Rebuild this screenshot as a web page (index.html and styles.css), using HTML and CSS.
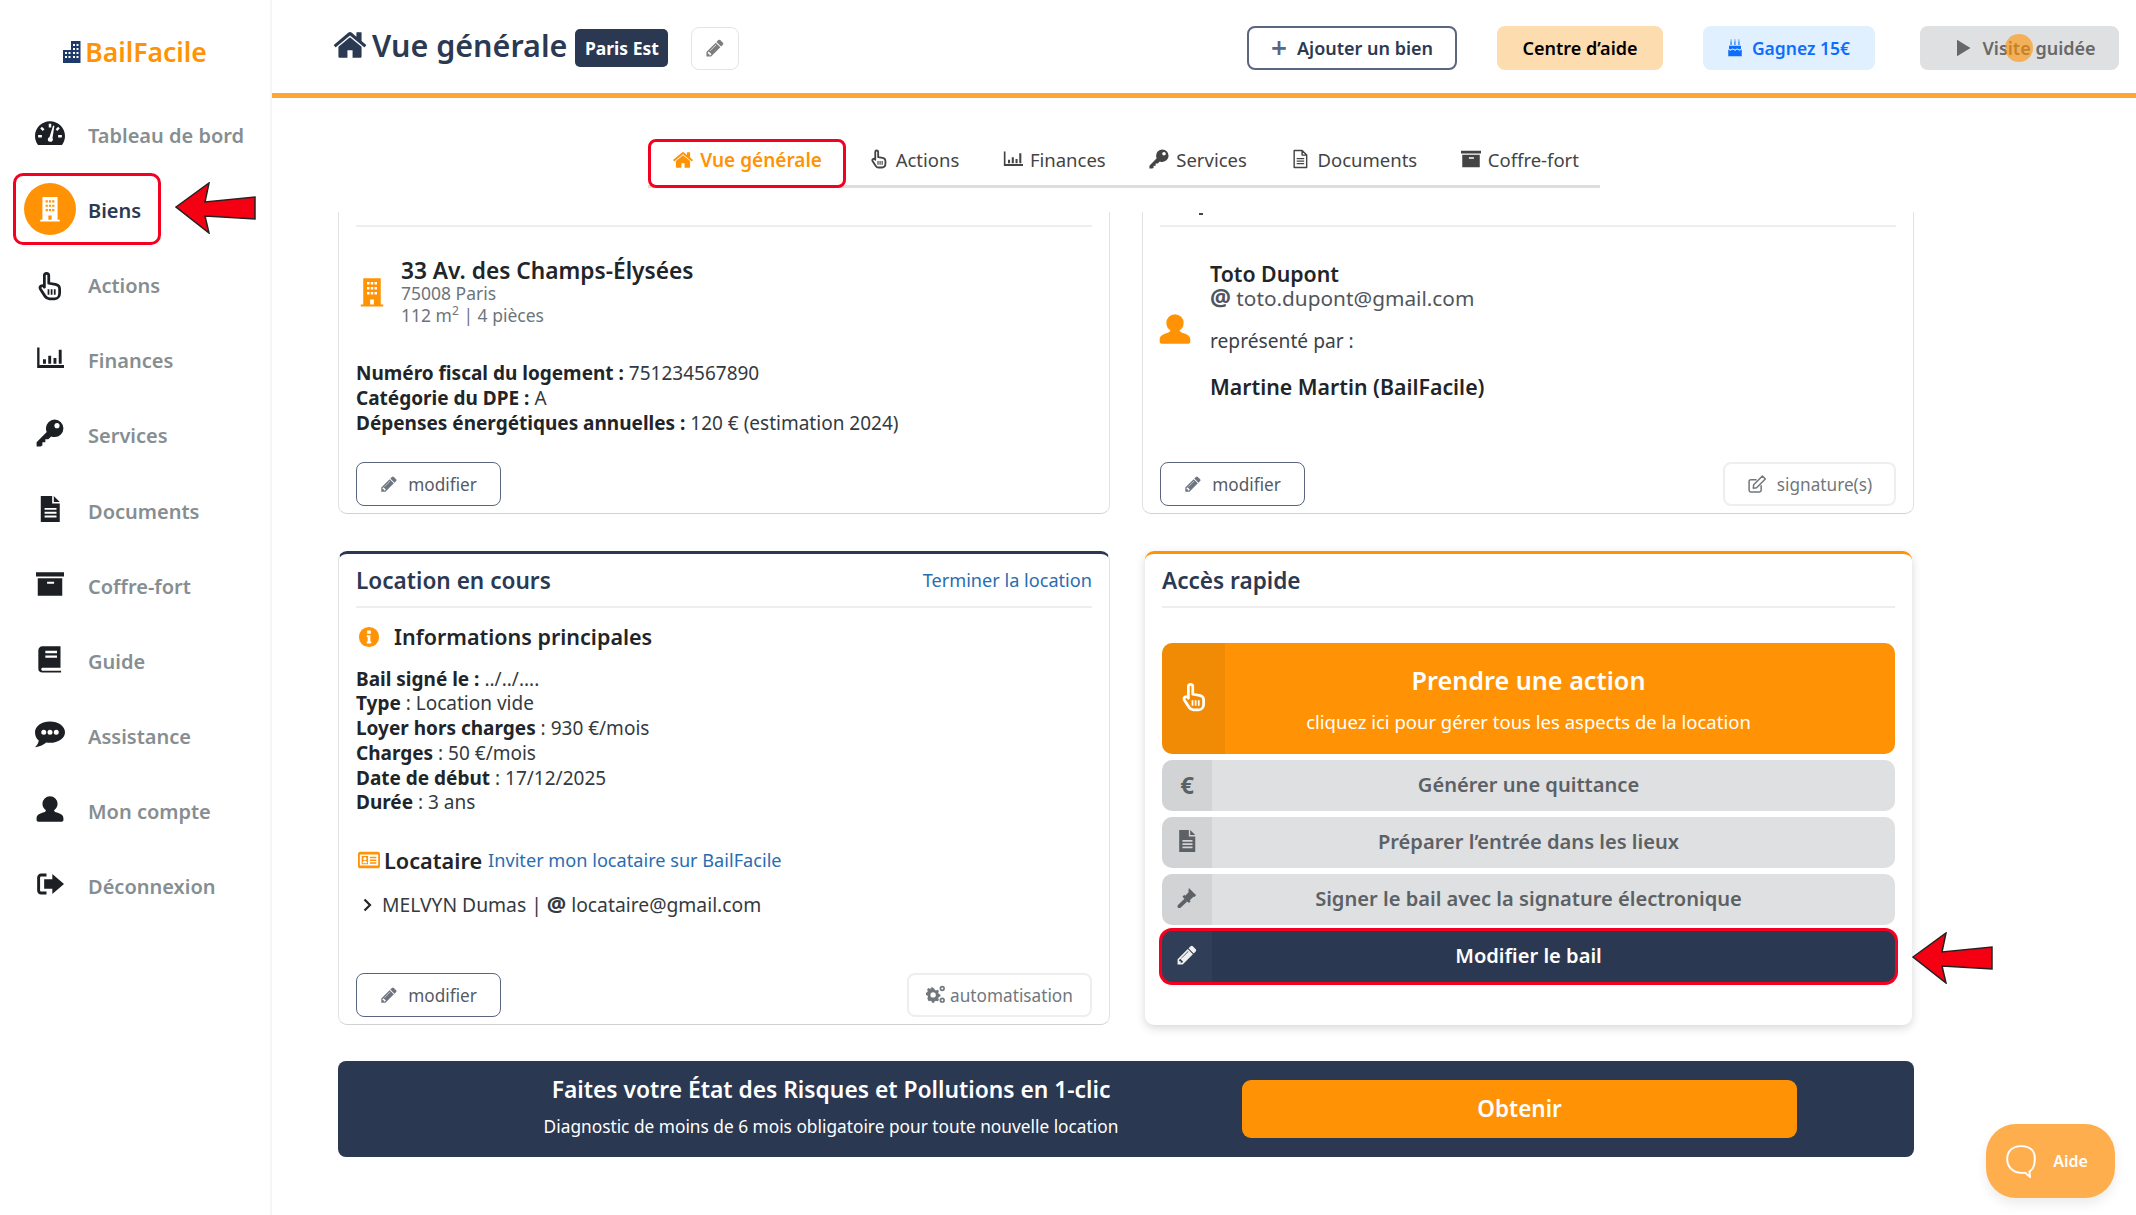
FILE: index.html
```html
<!DOCTYPE html>
<html lang="fr">
<head>
<meta charset="utf-8">
<title>BailFacile - Vue générale</title>
<link rel="stylesheet" href="styles.css">
</head>
<body>
<svg class="defs" width="0" height="0" aria-hidden="true">
  <symbol id="i-home" viewBox="0 0 1792 1792"><path d="M1472 992v480q0 26-19 45t-45 19h-384v-384h-256v384h-384q-26 0-45-19t-19-45v-480q0-1 .5-3t.5-3l575-474 575 474q1 2 1 6zm223-69l-62 74q-8 9-21 11h-3q-13 0-21-7l-692-577-692 577q-12 8-24 7-13-2-21-11l-62-74q-8-10-7-23.500t11-21.500l719-599q32-26 76-26t76 26l244 204v-195q0-14 9-23t23-9h192q14 0 23 9t9 23v408l219 182q10 8 11 21.500t-7 23.500z"/></symbol>
  <symbol id="i-pencil" viewBox="0 0 1792 1792"><path d="M491 1536l91-91-235-235-91 91v107h128v128h107zm523-928q0-22-22-22-10 0-17 7l-542 542q-7 7-7 17 0 22 22 22 10 0 17-7l542-542q7-7 7-17zm-54-192l416 416-832 832h-416v-416zm683 96q0 53-37 90l-166 166-416-416 166-165q36-38 90-38 53 0 91 38l235 234q37 39 37 91z"/></symbol>
  <symbol id="i-key" viewBox="0 0 24 24"><path fill-rule="evenodd" d="M16 .5a7.500 7.500 0 110 15c-1.100 0-2.100-.2-3-.6L10.500 17.400H8v2.600H5.500v2.500l-1.500 1H.5v-3.500l8.700-8.900c-.4-.9-.7-2-.7-3.100A7.500 7.500 0 0116 .5zM18 3.500a2.200 2.200 0 100 4.400 2.200 2.200 0 000-4.400z"/></symbol>
  <symbol id="i-user" viewBox="0 0 24 24"><path d="M12 1a6.500 6.500 0 016.500 6.500c0 2.500-1.300 4.500-3 5.500 0 1 1 1.500 2.500 2 3 1 5.500 2 5.500 5v1.500c0 .8-.7 1.500-1.500 1.500H2c-.8 0-1.500-.7-1.500-1.500V20c0-3 2.500-4 5.500-5 1.500-.5 2.500-1 2.500-2-1.700-1-3-3-3-5.500A6.500 6.500 0 0112 1z"/></symbol>
  <symbol id="i-hand" viewBox="0 0 24 24"><path fill="none" stroke="currentColor" stroke-width="2.200" stroke-linejoin="round" d="M9.200 1.800c1 0 1.800.8 1.800 1.800v6.200l5.300.9c2.200.4 3.400 1.600 3.400 3.600v3.200c0 2.500-1.500 4.700-4 4.700h-4.200c-1.500 0-2.600-.7-3.400-1.900l-3.700-5.700c-.6-1-.3-2.100.5-2.600s1.800-.2 2.400.6l.2.300V3.600c0-1 .7-1.800 1.700-1.800z"/><path stroke="currentColor" stroke-width="1.400" d="M10.800 14.500v4.500M13.300 14.500v4.500M15.800 14.500v4.500"/></symbol>
  <symbol id="i-chart" viewBox="0 0 24 24"><path d="M1 3h2v15h21v2.500H1z"/><path d="M6 13h2.500v4H6zM10.500 10H13v7h-2.500zM15 12h2.500v5H15zM19.500 5H22v12h-2.500z"/></symbol>
  <symbol id="i-file" viewBox="0 0 24 24"><path fill-rule="evenodd" d="M3.500 0h10.500v7h7v17H3.500zM7 11v1.800h11V11zM7 14.500v1.800h11v-1.800zM7 18v1.800h11V18z"/><path d="M15.500 0l5.500 5.500h-5.500z"/></symbol>
  <symbol id="i-file-o" viewBox="0 0 24 24"><path fill="none" stroke="currentColor" stroke-width="1.700" stroke-linejoin="round" d="M5 1.800h9.500L20 7.300v14.900H5zM14.500 1.800v5.500H20"/><path stroke="currentColor" stroke-width="1.500" d="M8 11.500h9M8 14.500h9M8 17.500h9"/></symbol>
  <symbol id="i-archive" viewBox="0 0 24 24"><path fill-rule="evenodd" d="M0 2h24v3.500H0zM1.500 7h21v15h-21zM9.500 10v1.800h6V10z"/></symbol>
  <symbol id="i-book" viewBox="0 0 24 24"><path fill-rule="evenodd" d="M5.500 1H21v18.500H6c-1 0-1.500.5-1.500 1.200S5 22 6 22h15.500v1.500H5.500C3.500 23.500 2 22.300 2 20.500V4.500C2 2.500 3.500 1 5.500 1zM8 5v2h10V5zM8 9v2h10V9z"/></symbol>
  <symbol id="i-chat" viewBox="0 0 24 24"><path fill-rule="evenodd" d="M12 2c6.600 0 12 3.700 12 8.500S18.600 19 12 19c-1 0-2-.1-3-.3C7 20.500 4 22 0 22.500c1.500-1.300 2.800-3 3-5.300C1.100 15.700 0 13.200 0 10.500 0 5.700 5.400 2 12 2zM7 8.500a2 2 0 100 4 2 2 0 000-4zm5 0a2 2 0 100 4 2 2 0 000-4zm5 0a2 2 0 100 4 2 2 0 000-4z"/></symbol>
  <symbol id="i-out" viewBox="0 0 24 24"><path d="M1 6.500C1 4.500 2.500 3 4.500 3H9v2.500H4.500c-.6 0-1 .4-1 1v11c0 .6.400 1 1 1H9V21H4.500C2.500 21 1 19.500 1 17.500z"/><path d="M14 3.500L24 12l-10 8.500V16H7V8h7z"/></symbol>
  <symbol id="i-gauge" viewBox="0 0 24 24"><path fill-rule="evenodd" d="M12 2.500c6.600 0 12 5.300 12 11.800 0 2.700-.9 5.200-2.400 7.200H2.400C.9 19.500 0 17 0 14.300 0 7.800 5.400 2.500 12 2.500zM11 4.500v3h2v-3zM5.500 7l-1.300 1.300 2 2 1.400-1.300zM18.500 7l-2 2 1.300 1.300 2-2zM2.500 13.500v2h3v-2zM18.500 13.500v2h3v-2z"/><path fill="#fff" d="M14.500 6l1 .4-1.500 9.600c.3.500.4 1 .3 1.500-.3 1.100-1.400 1.800-2.500 1.500s-1.800-1.400-1.500-2.500c.2-.7.700-1.200 1.300-1.400z"/></symbol>
  <symbol id="i-tower" viewBox="0 0 24 24"><path fill-rule="evenodd" d="M5 1h14v21h2v1.500H3V22h2zM8 4v2h2V4zM11 4v2h2V4zM14 4v2h2V4zM8 8v2h2V8zM11 8v2h2V8zM14 8v2h2V8zM8 12v2h2v-2zM11 12v2h2v-2zM14 12v2h2v-2zM10.500 18v4h3v-4z"/></symbol>
  <symbol id="i-edit" viewBox="0 0 24 24"><path fill="none" stroke="currentColor" stroke-width="1.800" stroke-linejoin="round" d="M17 13.500v6c0 1.200-.8 2-2 2H4.500c-1.200 0-2-.8-2-2V9c0-1.200.8-2 2-2h7"/><path fill="none" stroke="currentColor" stroke-width="1.800" stroke-linejoin="round" d="M8 13l-.5 4 4-.5L22 6l-3.500-3.500z"/></symbol>
  <symbol id="i-gears" viewBox="0 0 24 24"><path fill-rule="evenodd" d="M8 5l1.500.3.800 2.100 1.700.7 2-.9 1.800 1.800-.9 2 .7 1.700 2.100.8v2.600l-2.100.8-.7 1.700.9 2-1.800 1.800-2-.9-1.700.7-.8 2.100H6.900l-.8-2.100-1.700-.7-2 .9L.6 18.600l.9-2-.7-1.700-2.100-.8v-.1V11.400l1.800-.8.700-1.700-.9-2 1.800-1.800 2 .9 1.700-.7.800-2.100zM8.200 10.500a3.500 3.500 0 100 7 3.500 3.500 0 000-7z" transform="translate(1 -1) scale(.92)"/><path fill-rule="evenodd" d="M19.500 1a3.200 3.200 0 110 6.400 3.200 3.200 0 010-6.400zm0 2a1.200 1.200 0 100 2.400 1.200 1.200 0 000-2.400zM19.500 15a3.200 3.200 0 110 6.400 3.200 3.200 0 010-6.400zm0 2a1.200 1.200 0 100 2.400 1.200 1.200 0 000-2.400z"/></symbol>
  <symbol id="i-info" viewBox="0 0 24 24"><path fill-rule="evenodd" d="M12 1a11 11 0 110 22 11 11 0 010-22zM10 5v3.500h4V5zM9.500 10v2h1v5h-1v2h5v-2h-1v-7z"/></symbol>
  <symbol id="i-card" viewBox="0 0 24 24"><path fill-rule="evenodd" d="M2.500 3h19C23 3 24 4 24 5.500v13c0 1.500-1 2.500-2.500 2.500h-19C1 21 0 20 0 18.500v-13C0 4 1 3 2.500 3zM2 6v12h20V6zM4 7.500h7v9H4zM13 8.500h7V10h-7zM13 11.500h7V13h-7zM13 14.500h7V16h-7z"/><circle cx="7.500" cy="10.500" r="1.800" fill="#fff"/><path fill="#fff" d="M5 15.500c0-1.800 1-2.800 2.500-2.800s2.500 1 2.500 2.800z"/></symbol>
  <symbol id="i-cake" viewBox="0 0 24 24"><path d="M3 14c1.500 0 1.500 1.500 3 1.500S7.500 14 9 14s1.500 1.500 3 1.500 1.500-1.500 3-1.500 1.500 1.500 3 1.500 1.500-1.500 3-1.500v9H3zM4 9h16v4c-1.200.2-1.500 1-2 1-1 0-1.500-1.300-3-1.300S13 14 12 14s-1.500-1.300-3-1.300S7 14 6 14c-.5 0-.8-.8-2-1z"/><path d="M6 3h1.500v5H6zM11.200 3h1.500v5h-1.500zM16.500 3H18v5h-1.500zM6.700 0l1 2H5.800zM12 0l1 2h-2zM17.200 0l1 2h-2z"/></symbol>
  <symbol id="i-gavel" viewBox="0 0 24 24"><path d="M14 1l8 8-2 2-1-.5-4 4 1 1-2 2-7-7 2-2 1 1 4-4-.5-1z"/><path d="M9.500 12.500l3 3-7.500 7c-.8.700-2 .7-2.800 0s-.7-2 0-2.800z"/></symbol>
  <symbol id="i-play" viewBox="0 0 24 24"><path d="M4 1l18 11L4 23z"/></symbol>
  <symbol id="i-arrow" viewBox="0 0 82 52"><path fill="#f40012" stroke="#222" stroke-width="1.500" d="M1 25L34 1l-4 19 50-5v22l-50-3 4 17z"/></symbol>
</svg>

<div class="app">
  <aside class="sidebar">
    <div class="logo">
      <svg class="logo-mark" viewBox="0 0 18 22"><path fill="#1d3a6b" fill-rule="evenodd" d="M8 0h9.500v22H0V9h8zM10 3v2h2V3zM13.500 3v2h2V3zM10 7v2h2V7zM13.500 7v2h2V7zM2 11v2h2v-2zM5.500 11v2h2v-2zM10 11v2h2v-2zM13.500 11v2h2v-2zM2 15v2h2v-2zM5.500 15v2h2v-2zM10 15v2h2v-2zM13.500 15v2h2v-2z"/></svg>
      <span>BailFacile</span>
    </div>
    <nav class="nav">
      <a class="nav-item"><span class="nav-icon"><svg class="ic-30"><use href="#i-gauge"/></svg></span>Tableau de bord</a>
      <a class="nav-item is-active"><span class="nav-icon"><span class="nav-bubble"><svg class="ic-26"><use href="#i-tower"/></svg></span></span>Biens</a>
      <a class="nav-item"><span class="nav-icon nav-icon-hand"><svg class="ic-30"><use href="#i-hand"/></svg></span>Actions</a>
      <a class="nav-item"><span class="nav-icon"><svg class="ic-28"><use href="#i-chart"/></svg></span>Finances</a>
      <a class="nav-item"><span class="nav-icon"><svg class="ic-28"><use href="#i-key"/></svg></span>Services</a>
      <a class="nav-item"><span class="nav-icon"><svg class="ic-26"><use href="#i-file"/></svg></span>Documents</a>
      <a class="nav-item"><span class="nav-icon"><svg class="ic-28"><use href="#i-archive"/></svg></span>Coffre-fort</a>
      <a class="nav-item"><span class="nav-icon"><svg class="ic-28"><use href="#i-book"/></svg></span>Guide</a>
      <a class="nav-item"><span class="nav-icon"><svg class="ic-30"><use href="#i-chat"/></svg></span>Assistance</a>
      <a class="nav-item"><span class="nav-icon"><svg class="ic-28"><use href="#i-user"/></svg></span>Mon compte</a>
      <a class="nav-item"><span class="nav-icon"><svg class="ic-28"><use href="#i-out"/></svg></span>Déconnexion</a>
    </nav>
  </aside>

  <main class="main">
    <header class="topbar">
      <div class="top-left">
        <h1 class="page-title"><svg class="ic-title"><use href="#i-home"/></svg>Vue générale</h1>
        <span class="badge">Paris Est</span>
        <button class="icon-btn"><svg class="ic-20"><use href="#i-pencil"/></svg></button>
      </div>
      <div class="top-right">
        <button class="tb tb-outline"><span class="plus">+</span>Ajouter un bien</button>
        <button class="tb tb-peach">Centre d’aide</button>
        <button class="tb tb-blue"><svg class="ic-18"><use href="#i-cake"/></svg>Gagnez 15€</button>
        <button class="tb tb-grey"><svg class="ic-18"><use href="#i-play"/></svg>Visite guidée<span class="tour-dot"></span></button>
      </div>
    </header>

    <div class="tabs-wrap">
      <div class="tabs">
        <a class="tab is-current"><svg class="ic-22"><use href="#i-home"/></svg>Vue générale</a>
        <a class="tab"><svg class="ic-20"><use href="#i-hand"/></svg>Actions</a>
        <a class="tab"><svg class="ic-20"><use href="#i-chart"/></svg>Finances</a>
        <a class="tab"><svg class="ic-20"><use href="#i-key"/></svg>Services</a>
        <a class="tab"><svg class="ic-20"><use href="#i-file-o"/></svg>Documents</a>
        <a class="tab"><svg class="ic-20"><use href="#i-archive"/></svg>Coffre-fort</a>
      </div>
    </div>

    <div class="scroller">
      <div class="scroll-inner">
        <div class="row row-top">
          <section class="card">
            <div class="card-head"></div>
            <div class="address">
              <svg class="ic-addr"><use href="#i-tower"/></svg>
              <div>
                <div class="addr-name">33 Av. des Champs-Élysées</div>
                <div class="addr-sub">75008 Paris</div>
                <div class="addr-sub">112 m<sup>2</sup> | 4 pièces</div>
              </div>
            </div>
            <div class="facts facts-top">
              <div><b>Numéro fiscal du logement :</b> 751234567890</div>
              <div><b>Catégorie du DPE :</b> A</div>
              <div><b>Dépenses énergétiques annuelles :</b> 120 € (estimation 2024)</div>
            </div>
            <div class="card-foot">
              <button class="btn btn-main"><svg class="ic-18"><use href="#i-pencil"/></svg>modifier</button>
            </div>
          </section>

          <section class="card">
            <div class="card-head card-head-tick"></div>
            <div class="owner">
              <svg class="ic-owner"><use href="#i-user"/></svg>
              <div>
                <div class="owner-name">Toto Dupont</div>
                <div class="owner-mail"><span class="at">@</span> toto.dupont@gmail.com</div>
                <div class="owner-rep">représenté par :</div>
                <div class="owner-name owner-agent">Martine Martin (BailFacile)</div>
              </div>
            </div>
            <div class="card-foot">
              <button class="btn btn-main"><svg class="ic-18"><use href="#i-pencil"/></svg>modifier</button>
              <button class="btn btn-soft"><svg class="ic-20"><use href="#i-edit"/></svg>signature(s)</button>
            </div>
          </section>
        </div>

        <div class="row row-mid">
          <section class="card card-navy">
            <div class="card-head">
              <h2>Location en cours</h2>
              <a class="link">Terminer la location</a>
            </div>
            <h3 class="info-title"><svg class="ic-info"><use href="#i-info"/></svg>Informations principales</h3>
            <div class="facts">
              <div><b>Bail signé le :</b> ../../....</div>
              <div><b>Type</b> : Location vide</div>
              <div><b>Loyer hors charges</b> : 930 €/mois</div>
              <div><b>Charges</b> : 50 €/mois</div>
              <div><b>Date de début</b> : 17/12/2025</div>
              <div><b>Durée</b> : 3 ans</div>
            </div>
            <div class="tenant-head">
              <svg class="ic-card"><use href="#i-card"/></svg><b>Locataire</b><a class="link">Inviter mon locataire sur BailFacile</a>
            </div>
            <div class="tenant-line">
              <svg class="chev" viewBox="0 0 10 14"><path d="M2.500 1.500L8 7l-5.500 5.500" fill="none" stroke="currentColor" stroke-width="2.200"/></svg>
              <span>MELVYN Dumas | <span class="at">@</span> locataire@gmail.com</span>
            </div>
            <div class="card-foot">
              <button class="btn btn-main"><svg class="ic-18"><use href="#i-pencil"/></svg>modifier</button>
              <button class="btn btn-soft btn-auto"><svg class="ic-20"><use href="#i-gears"/></svg>automatisation</button>
            </div>
          </section>

          <section class="card card-orange">
            <div class="card-head"><h2>Accès rapide</h2></div>
            <div class="quick">
              <a class="qa qa-primary">
                <span class="qa-icon"><svg class="ic-30"><use href="#i-hand"/></svg></span>
                <span class="qa-text"><strong>Prendre une action</strong><small>cliquez ici pour gérer tous les aspects de la location</small></span>
              </a>
              <a class="qa"><span class="qa-icon qa-euro">€</span><span class="qa-text">Générer une quittance</span></a>
              <a class="qa"><span class="qa-icon"><svg class="ic-22"><use href="#i-file"/></svg></span><span class="qa-text">Préparer l’entrée dans les lieux</span></a>
              <a class="qa"><span class="qa-icon"><svg class="ic-22"><use href="#i-gavel"/></svg></span><span class="qa-text">Signer le bail avec la signature électronique</span></a>
              <a class="qa qa-navy"><span class="qa-icon"><svg class="ic-22"><use href="#i-pencil"/></svg></span><span class="qa-text">Modifier le bail</span></a>
            </div>
          </section>
        </div>

        <section class="banner">
          <div class="banner-text">
            <strong>Faites votre État des Risques et Pollutions en 1-clic</strong>
            <span>Diagnostic de moins de 6 mois obligatoire pour toute nouvelle location</span>
          </div>
          <a class="banner-btn">Obtenir</a>
        </section>
      </div>
    </div>
  </main>

  <svg class="arrow arrow-nav"><use href="#i-arrow"/></svg>
  <svg class="arrow arrow-qa"><use href="#i-arrow"/></svg>

  <button class="help">
    <svg class="help-ic" viewBox="0 0 30 32"><path fill="none" stroke="#fff" stroke-width="1.800" d="M15 2c7.500 0 13 3.500 13 12 0 6-2 10-5 12l.5 5-4.500-4c-1 .2-2 .2-4 .2C8 27 2 22 2 14 2 6 8 2 15 2z"/></svg>
    <span>Aide</span>
  </button>
</div>
</body>
</html>
```

FILE: styles.css
```css
*, *::before, *::after { box-sizing: border-box; }
html, body { margin: 0; height: 100%; }
body {
  font-family: "Noto Sans", "Open Sans", sans-serif;
  font-size: 18px;
  color: #212529;
  background: #fff;
  overflow: hidden;
}
button { font-family: inherit; cursor: pointer; }
svg { fill: currentColor; flex: none; }
.defs { position: absolute; }

.ic-18 { width: 18px; height: 18px; }
.ic-20 { width: 20px; height: 20px; }
.ic-22 { width: 22px; height: 22px; }
.ic-26 { width: 26px; height: 26px; }
.ic-28 { width: 28px; height: 28px; }
.ic-30 { width: 30px; height: 30px; }

.app { position: relative; display: flex; width: 2136px; height: 1215px; overflow: hidden; }

/* sidebar */
.sidebar { width: 272px; flex: none; border-right: 2px solid #f5f5f5; }
.logo {
  height: 98px; display: flex; align-items: flex-start; justify-content: center;
  gap: 4px; padding-top: 33px;
  color: #ff9305; font-size: 26.500px; font-weight: 600; line-height: 38px;
}
.logo-mark { width: 18px; height: 22px; margin-top: 8px; }
.nav-item {
  position: relative; height: 75.100px; display: flex; align-items: center;
  padding-left: 12px; color: #868e92; font-size: 20px; font-weight: 600;
}
.nav-icon { width: 76px; display: flex; justify-content: center; color: #1c1f23; padding-bottom: 5px; }
.nav-icon-hand { padding-bottom: 0; }
.nav-item.is-active { color: #2b3952; }
.nav-item.is-active .nav-icon { padding-bottom: 0; }
.nav-item.is-active::before {
  content: ""; position: absolute; left: 13px; top: 0; width: 148px; height: 72px;
  border: 3px solid #f40020; border-radius: 10px;
}
.nav-bubble {
  width: 52px; height: 52px; border-radius: 50%; background: #ff9305; color: #fff;
  display: flex; align-items: center; justify-content: center; margin-top: -3px;
}

/* main */
.main { flex: 1; min-width: 0; display: flex; flex-direction: column; }
.topbar {
  height: 98px; flex: none; border-bottom: 5px solid #ffa733;
  display: flex; align-items: center; justify-content: space-between;
  padding: 3px 17px 0 60px;
}
.top-left { display: flex; align-items: center; }
.page-title {
  margin: 0; display: flex; align-items: center; gap: 4px;
  font-size: 30.500px; line-height: 44px; font-weight: 600; color: #2b3952;
  padding-bottom: 6px;
}
.ic-title { width: 36px; height: 36px; }
.badge {
  margin-left: 8px; width: 93px; height: 38px; border-radius: 5px;
  background: #2b3852; color: #fff; font-size: 17.500px; font-weight: 700;
  display: flex; align-items: center; justify-content: center;
}
.icon-btn {
  margin-left: 23px; width: 48px; height: 43px; background: #fff;
  border: 1px solid #e4e4e4; border-radius: 8px; color: #7d7d7d;
  display: flex; align-items: center; justify-content: center; padding: 0;
}
.top-right { display: flex; align-items: center; gap: 40px; }
.tb {
  position: relative; height: 44px; border-radius: 8px; border: 0; font-size: 18px; font-weight: 600;
  display: flex; align-items: center; justify-content: center; gap: 10px; padding: 0;
}
.tb-outline { width: 210px; background: #fff; border: 2px solid #5a6580; color: #2b3952; }
.plus { font-size: 28px; line-height: 28px; color: #5a6580; font-weight: 600; margin-top: -3px; }
.tb-peach { width: 166px; background: #fddcb0; color: #000; }
.tb-blue { width: 172px; gap: 8px; padding-right: 2px; background: #e1f0ff; color: #0d6efd; font-size: 17.500px; }
.tb-grey { width: 199px; margin-left: 5px; padding-left: 11px; background: #dfe0e2; color: #686868; }
.tour-dot {
  position: absolute; left: 85px; top: 8px; width: 28px; height: 28px; border-radius: 50%;
  background: rgba(255, 147, 5, .62);
}

/* tabs */
.tabs-wrap { flex: none; padding: 41px 226px 0 66px; display: flex; justify-content: center; }
.tabs { display: flex; align-items: stretch; height: 49px; border-bottom: 3px solid #dedede; padding-right: 21px; }
.tab {
  display: flex; align-items: center; gap: 7px; margin-left: 43.600px; padding-bottom: 6px;
  font-size: 18.500px; color: #444; white-space: nowrap;
}
.tab.is-current {
  margin: 0 -21px -3px 0; width: 198px; height: 49px; justify-content: center; gap: 6px; padding-bottom: 8px;
  border: 3px solid #f40020; border-radius: 8px; color: #ff9305; font-weight: 600; font-size: 19px;
}

/* scrolling content */
.scroller { flex: 1; min-height: 0; margin-top: 24px; overflow: hidden; padding: 0 222px 0 66px; }
.scroll-inner { margin-top: -42px; display: flex; flex-direction: column; }
.row { display: grid; grid-template-columns: 772px 772px; gap: 32px; }
.row-top { height: 344px; }
.row-mid { height: 474px; margin-top: 37px; }

.card {
  display: flex; flex-direction: column; background: #fff;
  border: 1px solid #e2e2e2; border-bottom-color: #d2d2d2; border-radius: 9px; padding: 0 17px;
}
.card-navy { border-top: 3px solid #2b3852; }
.card-orange {
  border: 0; border-top: 3px solid #ff9305; margin: 0 2px 0 3px; padding: 0 17px;
  box-shadow: 0 3px 10px rgba(0, 0, 0, .16);
}
.card-head {
  position: relative; height: 54px; flex: none; display: flex; align-items: center; justify-content: space-between;
  border-bottom: 2px solid #eeeeee;
}
.row-top .card-head { height: 56px; }
.card-head-tick::before {
  content: ""; position: absolute; left: 39px; top: 42px; width: 4px; height: 1.500px; background: #444;
}
.card-head h2 { margin: 0; font-size: 22.600px; font-weight: 600; color: #2b3952; }
.link { color: #2a6db0; font-size: 18.150px; }

.address { display: flex; align-items: center; gap: 14px; margin-top: 31px; }
.ic-addr { width: 30px; height: 30px; color: #ff9305; margin-left: 1px; }
.addr-name { font-size: 22.700px; line-height: 26px; font-weight: 600; color: #212529; margin-bottom: -2.500px; }
.addr-sub { font-size: 17.500px; line-height: 22px; color: #6d757c; }
.addr-sub sup { font-size: 12px; line-height: 0; }

.facts { font-size: 19px; line-height: 24.800px; color: #343a40; }
.facts b { font-weight: 700; color: #212529; }
.facts-top { margin-top: 35.500px; }

.owner { display: flex; align-items: center; gap: 19px; margin-top: 34px; }
.ic-owner { width: 32px; height: 32px; color: #ff9305; margin-left: -1px; margin-top: -3px; }
.owner-name { font-size: 21.300px; line-height: 26px; font-weight: 600; color: #212529; }
.owner-mail { font-size: 20.800px; line-height: 24px; color: #50565c; margin-top: -1px; }
.at { font-weight: 700; font-size: 1.120em; line-height: 1; }
.owner-rep { font-size: 19.200px; line-height: 24px; margin-top: 19px; color: #3c4248; }
.owner-agent { margin-top: 21px; }

.card-foot { margin-top: auto; margin-bottom: 7px; display: flex; justify-content: space-between; }
.btn {
  height: 44px; border-radius: 8px; background: #fff; font-size: 17.200px;
  display: flex; align-items: center; justify-content: center; gap: 10px; padding: 0;
}
.btn-main { width: 145px; border: 1.500px solid #5a6580; color: #555b62; }
.btn-main svg { color: #6d7480; }
.btn-soft { width: 173px; border: 2px solid #eeeeee; color: #71777c; }
.btn-auto { width: 185px; gap: 4px; }

.info-title {
  margin: 15px 0 0; display: flex; align-items: center; gap: 14px;
  font-size: 21.500px; line-height: 28px; font-weight: 600; color: #212529;
}
.ic-info { width: 22px; height: 22px; color: #ff9305; margin-left: 2px; }
.info-title + .facts { margin-top: 15.500px; }

.tenant-head { display: flex; align-items: center; margin-top: 30px; height: 30px; }
.tenant-head b { font-size: 21.700px; font-weight: 600; color: #212529; margin-right: 6px; }
.ic-card { width: 22px; height: 22px; color: #ff9305; margin: 0 4px 0 2px; }
.tenant-line { display: flex; align-items: center; gap: 10px; margin-top: 16px; font-size: 19.300px; line-height: 28px; color: #343a40; }
.chev { width: 10px; height: 14px; color: #212529; margin-left: 6px; }

.quick { display: flex; flex-direction: column; gap: 6px; margin-top: 35px; }
.qa {
  position: relative; display: flex; height: 51px; border-radius: 10px; overflow: hidden;
  background: #dfe0e2; color: #5c6165; font-size: 20.100px; font-weight: 600;
}
.qa-icon {
  width: 50px; flex: none; display: flex; align-items: center; justify-content: center;
  background: rgba(0, 0, 0, .055); padding-bottom: 3px;
}
.qa-euro { font-size: 24px; font-weight: 700; }
.qa-text { flex: 1; display: flex; flex-direction: column; align-items: center; justify-content: center; padding-right: 50px; padding-bottom: 2px; }
.qa-primary { height: 111px; background: #ff9305; color: #fff; }
.qa-primary .qa-icon { width: 63px; }
.qa-primary .qa-text { padding-right: 63px; gap: 12px; padding-bottom: 2px; }
.qa-primary strong { font-size: 25.200px; line-height: 36px; font-weight: 600; }
.qa-primary small { font-size: 18.500px; line-height: 24px; font-weight: 400; }
.qa-navy { background: #2b3852; color: #fff; box-shadow: 0 0 0 3px #f40020; overflow: visible; }
.qa-navy .qa-icon { border-radius: 10px 0 0 10px; background: rgba(255, 255, 255, .03); color: #f1f1f1; }

.banner {
  margin-top: 36px; height: 96px; border-radius: 8px; background: #2b3852; color: #fff;
  display: flex; align-items: center; padding-right: 117px;
}
.banner-text { flex: 1; display: flex; flex-direction: column; align-items: center; padding: 0 0 5px 82px; }
.banner-text strong { font-size: 22.800px; line-height: 30px; font-weight: 600; }
.banner-text span { font-size: 17.300px; line-height: 24px; margin-top: 10px; }
.banner-btn {
  width: 555px; height: 58px; flex: none; border-radius: 9px; background: #ff9305; padding-bottom: 2px;
  display: flex; align-items: center; justify-content: center; font-size: 22.500px; font-weight: 600;
}

/* overlays */
.arrow { position: absolute; width: 82px; height: 52px; }
.arrow-nav { left: 175px; top: 182px; }
.arrow-qa { left: 1912px; top: 932px; }
.help {
  position: absolute; left: 1986px; top: 1124px; width: 129px; height: 74px; border: 0; padding: 0 8px 0 0;
  border-radius: 30px; background: #ffae4e; color: #fff; font-size: 16px; font-weight: 600;
  display: flex; align-items: center; justify-content: center; gap: 16px;
  box-shadow: 0 6px 12px rgba(0, 0, 0, .08);
}
.help-ic { width: 32px; height: 34px; fill: none; }
```
